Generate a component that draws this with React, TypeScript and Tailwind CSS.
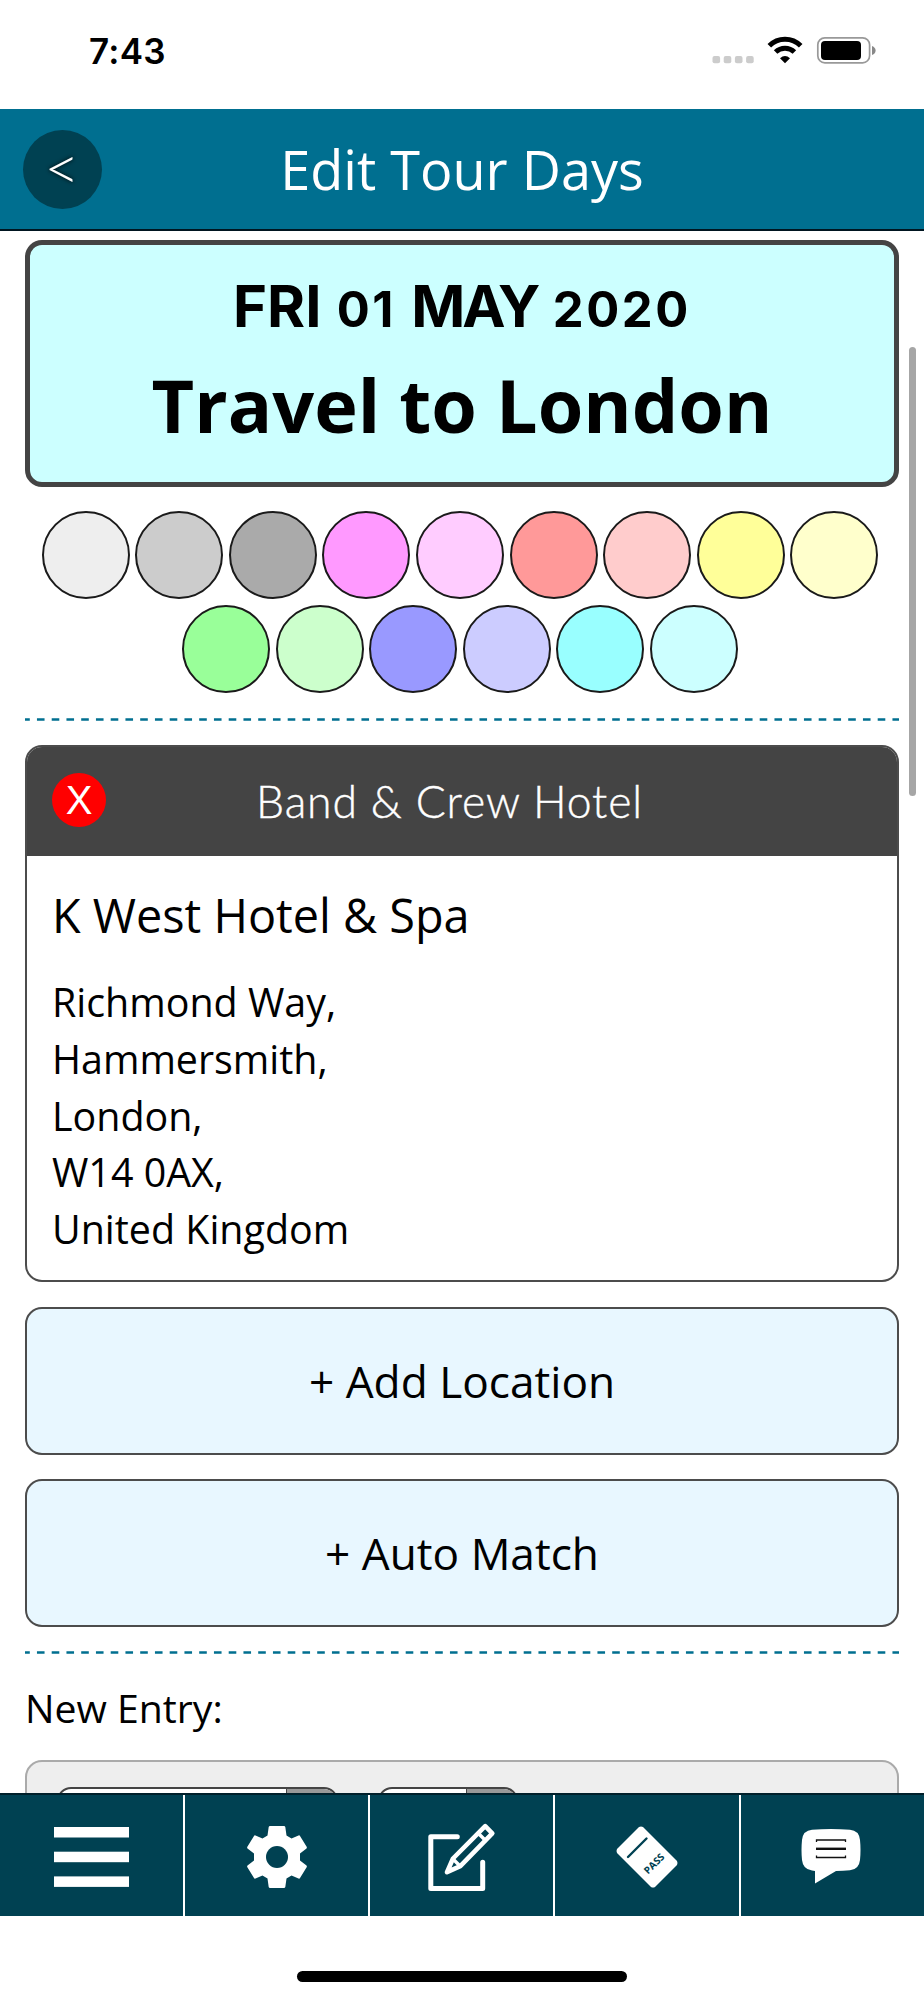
import React from 'react';
import { clsx } from 'clsx';

const SWATCHES = [
  'bg-[#eeeeee]',
  'bg-[#cccccc]',
  'bg-[#aaaaaa]',
  'bg-[#ff99ff]',
  'bg-[#ffccff]',
  'bg-[#ff9999]',
  'bg-[#ffcccc]',
  'bg-[#ffff99]',
  'bg-[#ffffcc]',
  'bg-[#99ff99]',
  'bg-[#ccffcc]',
  'bg-[#9999ff]',
  'bg-[#ccccff]',
  'bg-[#99ffff]',
  'bg-[#ccffff]',
];

const ADDRESS = ['Richmond Way,', 'Hammersmith,', 'London,', 'W14 0AX,', 'United Kingdom'];

function StatusBar() {
  return (
    <div className="flex h-[108.5px] items-start justify-between pl-[89px] pr-[48px]">
      <span className="mt-[30px] font-['Inter'] text-[35px] leading-[42px] font-semibold tracking-[0.3px]">7:43</span>
      <svg className="mt-[34px]" width="164" height="32" viewBox="0 0 164 32">
        {[0, 11.2, 22.4, 33.6].map((x) => (
          <rect key={x} x={x + 0.5} y="22" width="7.6" height="7.2" rx="2" fill="#cccccc" />
        ))}
        <g fill="none" stroke="#000" strokeWidth="5">
          <path d="M57.3 11.8A22 22 0 0 1 88.7 11.8" />
          <path d="M63.6 18A13.5 13.5 0 0 1 82.4 18" />
        </g>
        <path d="M68 24.2Q73 20 78 24.2L73 29.2Z" fill="#000" />
        <rect x="105.8" y="3.8" width="51.8" height="25" rx="7" fill="none" stroke="#999" strokeWidth="1.7" />
        <rect x="109" y="7" width="40" height="19" rx="4" fill="#000" />
        <path d="M160 12Q163.6 13.5 163.6 16.5Q163.6 19.5 160 21Z" fill="#888" />
      </svg>
    </div>
  );
}

function Header() {
  return (
    <header className="flex h-[122.5px] items-center border-b-2 border-[#001520] bg-[#006f90] px-[22.5px] text-white">
      <button className="mt-[1px] flex size-[79px] items-center justify-center rounded-full bg-[#004152] pb-[6px] font-['Lato'] text-[61px] leading-none font-light [text-shadow:0_0_4px_black]">
        &lt;
      </button>
      <h1 className="flex-1 text-center text-[54px] leading-none">Edit Tour Days</h1>
      <div className="w-[79px]" />
    </header>
  );
}

function Divider() {
  return (
    <svg className="block h-[3px] w-full" viewBox="0 0 874 3">
      <line x1="0" y1="1.5" x2="874" y2="1.5" stroke="#006f90" strokeWidth="2.6" strokeDasharray="7.6 7.15" strokeDashoffset="2.8" />
    </svg>
  );
}

// digits sit at x-height, like old style figures
function Digits({ children }: { children: string }) {
  return <span className="text-[49px] tracking-[2.6px]">{children}</span>;
}

function DayCard() {
  return (
    <section className="h-[247px] rounded-[17px] border-[5px] border-[#444] bg-[#ccffff] pt-[21px] text-center font-bold">
      <p className="h-[78px] font-['Inter'] text-[58px] leading-[80px] [word-spacing:1.5px]">
        FRI <Digits>01</Digits> <span className="tracking-[-3px]">MAY</span> <Digits>2020</Digits>
      </p>
      <p className="text-[73.7px] leading-[121px]">Travel to London</p>
    </section>
  );
}

function Swatches() {
  return (
    <div className="mt-[24px] flex flex-wrap justify-center gap-[5.6px] pr-[4px]">
      {SWATCHES.map((color) => (
        <div key={color} className={clsx('size-[88px] rounded-full border-2 border-[#1a1a1a]', color)} />
      ))}
    </div>
  );
}

function HotelCard() {
  return (
    <section className="mt-[24.5px] h-[537px] overflow-hidden rounded-[17px] border-2 border-[#4c4c4c]">
      <div className="flex h-[109px] items-center bg-[#444] pr-[104px] pb-[3px] pl-[25px] text-white">
        <button className="flex size-[54px] items-center justify-center rounded-full bg-[#ff0000] font-['Liberation_Sans'] text-[40px] leading-none">
          X
        </button>
        <h2 className="flex-1 pt-[2px] text-center font-['Lato'] text-[44.5px] leading-none font-light tracking-[0.9px] [-webkit-text-stroke:0.4px_white]">
          Band &amp; Crew Hotel
        </h2>
      </div>
      <div className="px-[25px] pt-[29px]">
        <h3 className="text-[46.8px] leading-[60px]">K West Hotel &amp; Spa</h3>
        <div className="mt-[29px] text-[39.4px] leading-[56.7px]">
          {ADDRESS.map((line) => (
            <p key={line}>{line}</p>
          ))}
        </div>
      </div>
    </section>
  );
}

function ActionButton({ label }: { label: string }) {
  return (
    <button className="mt-[24.5px] block h-[148px] w-full rounded-[17px] border-2 border-[#4c4c4c] bg-[#e8f7ff] pt-[1px] text-[44.2px]">
      {label}
    </button>
  );
}

function Select({ className }: { className: string }) {
  return (
    <div className={clsx('flex h-[60px] justify-end overflow-hidden rounded-[14px] border-2 border-[#444] bg-white', className)}>
      <div className="w-[50px] border-l border-[#444] bg-[#999]" />
    </div>
  );
}

function NavBar() {
  return (
    <nav className="grid h-[123px] grid-cols-[185px_185px_185px_185.5px_1fr] border-t-2 border-[#00202b] bg-[#004152]">
      <div className="flex items-center justify-center border-r-2 border-white pt-[2px]">
        <svg width="75" height="60" viewBox="0 0 75 60" fill="#fff">
          <rect y="0" width="75" height="10.5" />
          <rect y="24.7" width="75" height="10.5" />
          <rect y="49.4" width="75" height="10.5" />
        </svg>
      </div>
      <div className="flex items-center justify-center border-r-2 border-white pt-[2px]">
        <svg width="60" height="62" viewBox="0 0 60 62">
          <path
            d="M23 0H37Q38 0 38.3 1L39.5 9.5L44.5 12.5L51.5 9.5Q52.5 9 53 10L59.8 21Q60 22 59.5 22.5L53 27.5V34.5L59.5 39.5Q60 40 59.8 41L53 52Q52.5 53 51.5 52.5L44.5 49.5L39.5 52.5L38.3 61Q38 62 37 62H23Q22 62 21.7 61L20.5 52.5L15.5 49.5L8.5 52.5Q7.5 53 7 52L.2 41Q0 40 .5 39.5L7 34.5V27.5L.5 22.5Q0 22 .2 21L7 10Q7.5 9 8.5 9.5L15.5 12.5L20.5 9.5L21.7 1Q22 0 23 0Z"
            fill="#fff"
          />
          <circle cx="30" cy="31" r="11" fill="#004152" />
        </svg>
      </div>
      <div className="flex items-center justify-center border-r-2 border-white pt-[2px]">
        <svg width="68" height="70" viewBox="0 0 68 70" fill="none" stroke="#fff" strokeLinecap="round" strokeLinejoin="round">
          <path d="M29.3 14.8H2.8V66.5H54.7V40.2" strokeWidth="5" />
          <path d="M19 50.2L25 36.5L57.2 4.2L64.3 11.3L32.3 44.2L19 50.2Z" strokeWidth="4.6" />
          <path d="M25 37L32 44M50.5 11.5L57.5 18.5" strokeWidth="3.4" />
        </svg>
      </div>
      <div className="flex items-center justify-center border-r-2 border-white pt-[2px]">
        <svg width="62" height="62" viewBox="0 0 62 62">
          <path d="M1 23L23 1Q25 0 27 1L61 35Q62 37 61 39L39 61Q37 62 35 61L1 27Q0 25 1 23Z" fill="#fff" />
          <path d="M12 31L30.5 12.5" stroke="#004152" strokeWidth="2.4" strokeLinecap="round" />
          <text x="38.5" y="41" transform="rotate(-45 38.5 38)" textAnchor="middle" fontSize="10" fontWeight="700" fill="#004152" className="font-['Open_Sans']">
            PASS
          </text>
        </svg>
      </div>
      <div className="flex items-center justify-center pt-[1px] pr-[2px]">
        <svg width="60" height="55" viewBox="0 0 60 55">
          <path d="M11 .8Q30 -.8 49 .8Q58 1.5 59 11Q60 21 59 31Q58 40.5 49 41.3Q42 42 35 42L14 54.5V42L11 41.5Q2 40.5 1 31Q0 21 1 11Q2 1.5 11 .8Z" fill="#fff" />
          <g fill="none" stroke="#111" strokeWidth="1.3">
            <path d="M15.5 13V11H44.5V13M15.5 26.5V28.5H44.5V26.5" />
            <path d="M15 19.8H45" strokeWidth="2.4" />
          </g>
        </svg>
      </div>
    </nav>
  );
}

export default function App() {
  return (
    <div className="flex h-[2000px] w-[924px] flex-col overflow-hidden bg-white font-['Open_Sans',sans-serif] text-black">
      <StatusBar />
      <Header />
      <main className="relative h-[1562px] overflow-hidden px-[25px] pt-[9px]">
        <DayCard />
        <Swatches />
        <div className="mt-[25px]">
          <Divider />
        </div>
        <HotelCard />
        <ActionButton label="+ Add Location" />
        <ActionButton label="+ Auto Match" />
        <div className="mt-[23.5px]">
          <Divider />
        </div>
        <p className="mt-[24px] text-[39.2px] leading-[60px]">New Entry:</p>
        <div className="mt-[22px] flex h-[200px] gap-[40px] rounded-[17px] border-2 border-[#aaa] bg-[#eee] pt-[25px] pl-[30px]">
          <Select className="w-[281px]" />
          <Select className="w-[140px]" />
        </div>
        <div className="absolute top-[116px] right-[8px] h-[449px] w-[7px] rounded-full bg-[#a6a6a6]" />
      </main>
      <NavBar />
      <div className="flex justify-center pt-[55px]">
        <div className="h-[11px] w-[330px] rounded-full bg-black" />
      </div>
    </div>
  );
}
